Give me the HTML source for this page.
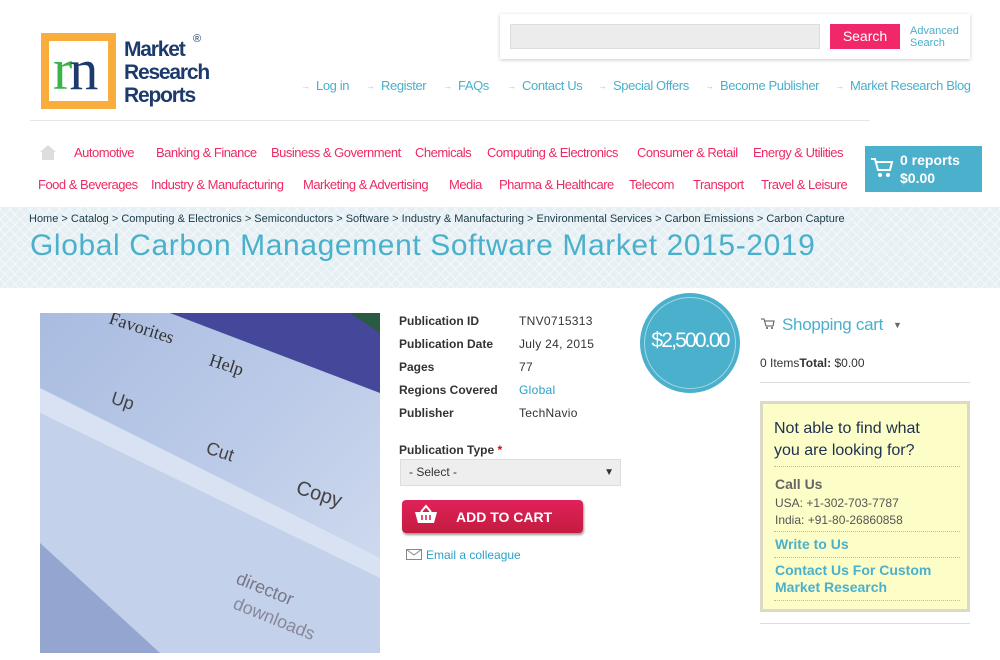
<!DOCTYPE html>
<html><head><meta charset="utf-8"><style>
*{margin:0;padding:0;box-sizing:border-box}
body{width:1000px;height:660px;overflow:hidden;background:#fff;font-family:"Liberation Sans",sans-serif;position:relative}
.a{position:absolute;white-space:nowrap}
.tl{font-size:13px;color:#4ab0cb;letter-spacing:-0.4px}
.tl:before{content:"→";color:#9cc;font-size:9px;position:absolute;left:-15px;top:3px}
.nv{font-size:13px;color:#ee2a62;letter-spacing:-0.5px}
.lb{font-size:12px;font-weight:bold;color:#333}
.vl{font-size:12px;color:#333;letter-spacing:.3px}
</style></head><body>
<!-- logo -->
<div class="a" style="left:41px;top:33px;width:75px;height:76px;background:#f9ad3c"></div>
<div class="a" style="left:49px;top:41px;width:59px;height:60px;background:#fff"></div>
<div class="a" style="left:53px;top:40px;font-family:'Liberation Serif',serif;font-size:58px;line-height:60px;color:#1c3a6b;letter-spacing:-3px"><span style="color:#3bb34a">r</span>n</div>
<div class="a" style="left:124px;top:38px;font-size:21px;line-height:23px;font-weight:bold;color:#1c3a6b;letter-spacing:-1.2px">Market<br>Research<br>Reports</div>
<div class="a" style="left:193px;top:33px;font-size:11px;color:#1c3a6b">®</div>
<!-- search -->
<div class="a" style="left:500px;top:14px;width:470px;height:45px;background:#fff;box-shadow:0 1px 4px rgba(0,0,0,.2)"></div>
<div class="a" style="left:510px;top:24px;width:310px;height:25px;background:#ececec;border:1px solid #ddd"></div>
<div class="a" style="left:830px;top:24px;width:70px;height:25px;background:#f0286a;color:#fff;font-size:14px;text-align:center;line-height:25px">Search</div>
<div class="a" style="left:910px;top:25px;font-size:11px;line-height:12px;color:#4ab0cb">Advanced<br>Search</div>
<!-- top links -->
<div class="a tl" style="left:316px;top:78px">Log in</div>
<div class="a tl" style="left:381px;top:78px">Register</div>
<div class="a tl" style="left:458px;top:78px">FAQs</div>
<div class="a tl" style="left:522px;top:78px">Contact Us</div>
<div class="a tl" style="left:613px;top:78px">Special Offers</div>
<div class="a tl" style="left:720px;top:78px">Become Publisher</div>
<div class="a tl" style="left:850px;top:78px">Market Research Blog</div>
<div class="a" style="left:30px;top:120px;width:840px;height:1px;background:#e6e6e6"></div>
<!-- nav -->
<svg class="a" style="left:39px;top:144px" width="18" height="17"><path d="M9 1 L17 8 L15 8 L15 16 L3 16 L3 8 L1 8Z" fill="#ddd"/></svg>
<div class="a nv" style="left:74px;top:145px">Automotive</div>
<div class="a nv" style="left:156px;top:145px">Banking &amp; Finance</div>
<div class="a nv" style="left:271px;top:145px">Business &amp; Government</div>
<div class="a nv" style="left:415px;top:145px">Chemicals</div>
<div class="a nv" style="left:487px;top:145px">Computing &amp; Electronics</div>
<div class="a nv" style="left:637px;top:145px">Consumer &amp; Retail</div>
<div class="a nv" style="left:753px;top:145px">Energy &amp; Utilities</div>
<div class="a nv" style="left:38px;top:177px">Food &amp; Beverages</div>
<div class="a nv" style="left:151px;top:177px">Industry &amp; Manufacturing</div>
<div class="a nv" style="left:303px;top:177px">Marketing &amp; Advertising</div>
<div class="a nv" style="left:449px;top:177px">Media</div>
<div class="a nv" style="left:499px;top:177px">Pharma &amp; Healthcare</div>
<div class="a nv" style="left:629px;top:177px">Telecom</div>
<div class="a nv" style="left:693px;top:177px">Transport</div>
<div class="a nv" style="left:761px;top:177px">Travel &amp; Leisure</div>
<div class="a" style="left:865px;top:146px;width:117px;height:46px;background:#4ab0cb"></div>
<svg class="a" style="left:870px;top:157px" width="24" height="22"><path d="M1 2 H5 L8 13 H20 L22 5 H6" fill="none" stroke="#fff" stroke-width="2"/><circle cx="10" cy="18" r="2" fill="#fff"/><circle cx="18" cy="18" r="2" fill="#fff"/></svg>
<div class="a" style="left:900px;top:151px;font-size:14px;line-height:18px;color:#fff;font-weight:bold">0 reports<br>$0.00</div>
<!-- banner -->
<div class="a" style="left:0;top:207px;width:1000px;height:81px;background:#e6f0f4;background-image:repeating-linear-gradient(45deg,transparent 0 6px,rgba(255,255,255,.5) 6px 7px),repeating-linear-gradient(-45deg,transparent 0 6px,rgba(255,255,255,.5) 6px 7px)"></div>
<div class="a" style="left:29px;top:213px;font-size:11px;color:#1a3a4a">Home &gt; Catalog &gt; Computing &amp; Electronics &gt; Semiconductors &gt; Software &gt; Industry &amp; Manufacturing &gt; Environmental Services &gt; Carbon Emissions &gt; Carbon Capture</div>
<div class="a" style="left:30px;top:229px;font-size:30px;color:#4ab0cb;letter-spacing:.6px">Global Carbon Management Software Market 2015-2019</div>
<!-- image -->
<svg class="a" style="left:40px;top:313px" width="340" height="340">
<defs><linearGradient id="g" x1="0" y1="0" x2="1" y2="1"><stop offset="0" stop-color="#a9bce0"/><stop offset=".5" stop-color="#bccbe8"/><stop offset="1" stop-color="#d4def0"/></linearGradient></defs>
<rect width="340" height="340" fill="url(#g)"/>
<polygon points="130,0 340,0 340,80" fill="#45489a"/>
<polygon points="310,0 340,0 340,20" fill="#2a5a40"/>
<polygon points="0,75 340,245 340,265 0,100" fill="#d8e2f3"/>
<polygon points="0,100 340,265 340,340 0,340" fill="#c4d1ea"/>
<polygon points="0,230 120,340 0,340" fill="#94a6d0"/>
<text x="68" y="10" transform="rotate(18 68 10)" font-family="Liberation Serif" font-size="18" fill="#333">Favorites</text>
<text x="168" y="52" transform="rotate(18 168 52)" font-family="Liberation Serif" font-size="18" fill="#333">Help</text>
<text x="70" y="90" transform="rotate(18 70 90)" font-size="18" fill="#444">Up</text>
<text x="165" y="140" transform="rotate(18 165 140)" font-size="18" fill="#444">Cut</text>
<text x="255" y="180" transform="rotate(18 255 180)" font-size="20" fill="#444">Copy</text>
<text x="195" y="270" transform="rotate(22 195 270)" font-size="18" fill="#778">director</text>
<text x="192" y="295" transform="rotate(22 192 295)" font-size="18" fill="#889">downloads</text>
</svg>
<!-- details -->
<div class="a lb" style="left:399px;top:314px">Publication ID</div><div class="a vl" style="left:519px;top:314px">TNV0715313</div>
<div class="a lb" style="left:399px;top:337px">Publication Date</div><div class="a vl" style="left:519px;top:337px">July 24, 2015</div>
<div class="a lb" style="left:399px;top:360px">Pages</div><div class="a vl" style="left:519px;top:360px">77</div>
<div class="a lb" style="left:399px;top:383px">Regions Covered</div><div class="a vl" style="left:519px;top:383px;color:#2ca0c8">Global</div>
<div class="a lb" style="left:399px;top:406px">Publisher</div><div class="a vl" style="left:519px;top:406px">TechNavio</div>
<div class="a lb" style="left:399px;top:443px">Publication Type <span style="color:#e00">*</span></div>
<div class="a" style="left:400px;top:459px;width:221px;height:27px;background:#eee;border:1px solid #ddd;font-size:12px;color:#333;line-height:25px;padding-left:8px">- Select -<span style="position:absolute;right:6px;font-size:10px">▼</span></div>
<div class="a" style="left:402px;top:500px;width:181px;height:33px;border-radius:4px;background:linear-gradient(#e0215a,#c41c40);box-shadow:1px 2px 2px #999"></div>
<svg class="a" style="left:414px;top:504px" width="24" height="20"><path d="M7 8 L12 2 L17 8" fill="none" stroke="#fff" stroke-width="2"/><path d="M1 8 H23 L20 19 H4Z" fill="#fff"/><path d="M8 11V16M12 11V16M16 11V16" stroke="#d01e4a" stroke-width="1.5"/></svg>
<div class="a" style="left:456px;top:509px;font-size:14px;font-weight:bold;color:#fff">ADD TO CART</div>
<svg class="a" style="left:406px;top:549px" width="16" height="11"><rect x=".5" y=".5" width="15" height="10" fill="none" stroke="#888"/><path d="M.5 .5L8 6L15.5 .5" fill="none" stroke="#888"/></svg>
<div class="a" style="left:426px;top:548px;font-size:12px;color:#2ca0c8">Email a colleague</div>
<!-- price -->
<div class="a" style="left:640px;top:293px;width:100px;height:100px;border-radius:50%;background:#4ab0cb"></div>
<div class="a" style="left:644px;top:297px;width:92px;height:92px;border-radius:50%;border:1px solid rgba(255,255,255,.5)"></div>
<div class="a" style="left:640px;top:329px;width:100px;text-align:center;font-size:21px;color:#fff;letter-spacing:-1.8px">$2,500.00</div>
<!-- sidebar -->
<svg class="a" style="left:761px;top:318px" width="14" height="12"><path d="M0 1H3L5 8H12L13 3H4" fill="none" stroke="#555"/><circle cx="6" cy="10" r="1" fill="#555"/><circle cx="11" cy="10" r="1" fill="#555"/></svg>
<div class="a" style="left:782px;top:315px;font-size:17px;color:#4ab0cb;letter-spacing:-0.3px">Shopping cart</div>
<div class="a" style="left:893px;top:320px;font-size:9px;color:#666">▼</div>
<div class="a" style="left:760px;top:356px;font-size:12px;color:#333">0 Items<b>Total:</b> $0.00</div>
<div class="a" style="left:760px;top:382px;width:210px;height:1px;background:#ddd"></div>
<div class="a" style="left:760px;top:401px;width:210px;height:211px;background:#fdfdc8;border:3px solid #dcdac4"></div>
<div class="a" style="left:774px;top:418px;font-size:16px;line-height:22px;color:#1c3050">Not able to find what<br>you are looking for?</div>
<div class="a" style="left:774px;top:466px;width:186px;border-top:1px dotted #bbb"></div>
<div class="a" style="left:775px;top:476px;font-size:14px;font-weight:bold;color:#666">Call Us</div>
<div class="a" style="left:775px;top:495px;font-size:12px;line-height:17px;color:#555">USA: +1-302-703-7787<br>India: +91-80-26860858</div>
<div class="a" style="left:774px;top:531px;width:186px;border-top:1px dotted #bbb"></div>
<div class="a" style="left:775px;top:536px;font-size:14px;font-weight:bold;color:#4ab0cb">Write to Us</div>
<div class="a" style="left:774px;top:557px;width:186px;border-top:1px dotted #bbb"></div>
<div class="a" style="left:775px;top:562px;font-size:14px;line-height:17px;font-weight:bold;color:#4ab0cb">Contact Us For Custom<br>Market Research</div>
<div class="a" style="left:774px;top:600px;width:186px;border-top:1px dotted #bbb"></div>
<div class="a" style="left:760px;top:623px;width:210px;height:1px;background:#ddd"></div>
</body></html>
